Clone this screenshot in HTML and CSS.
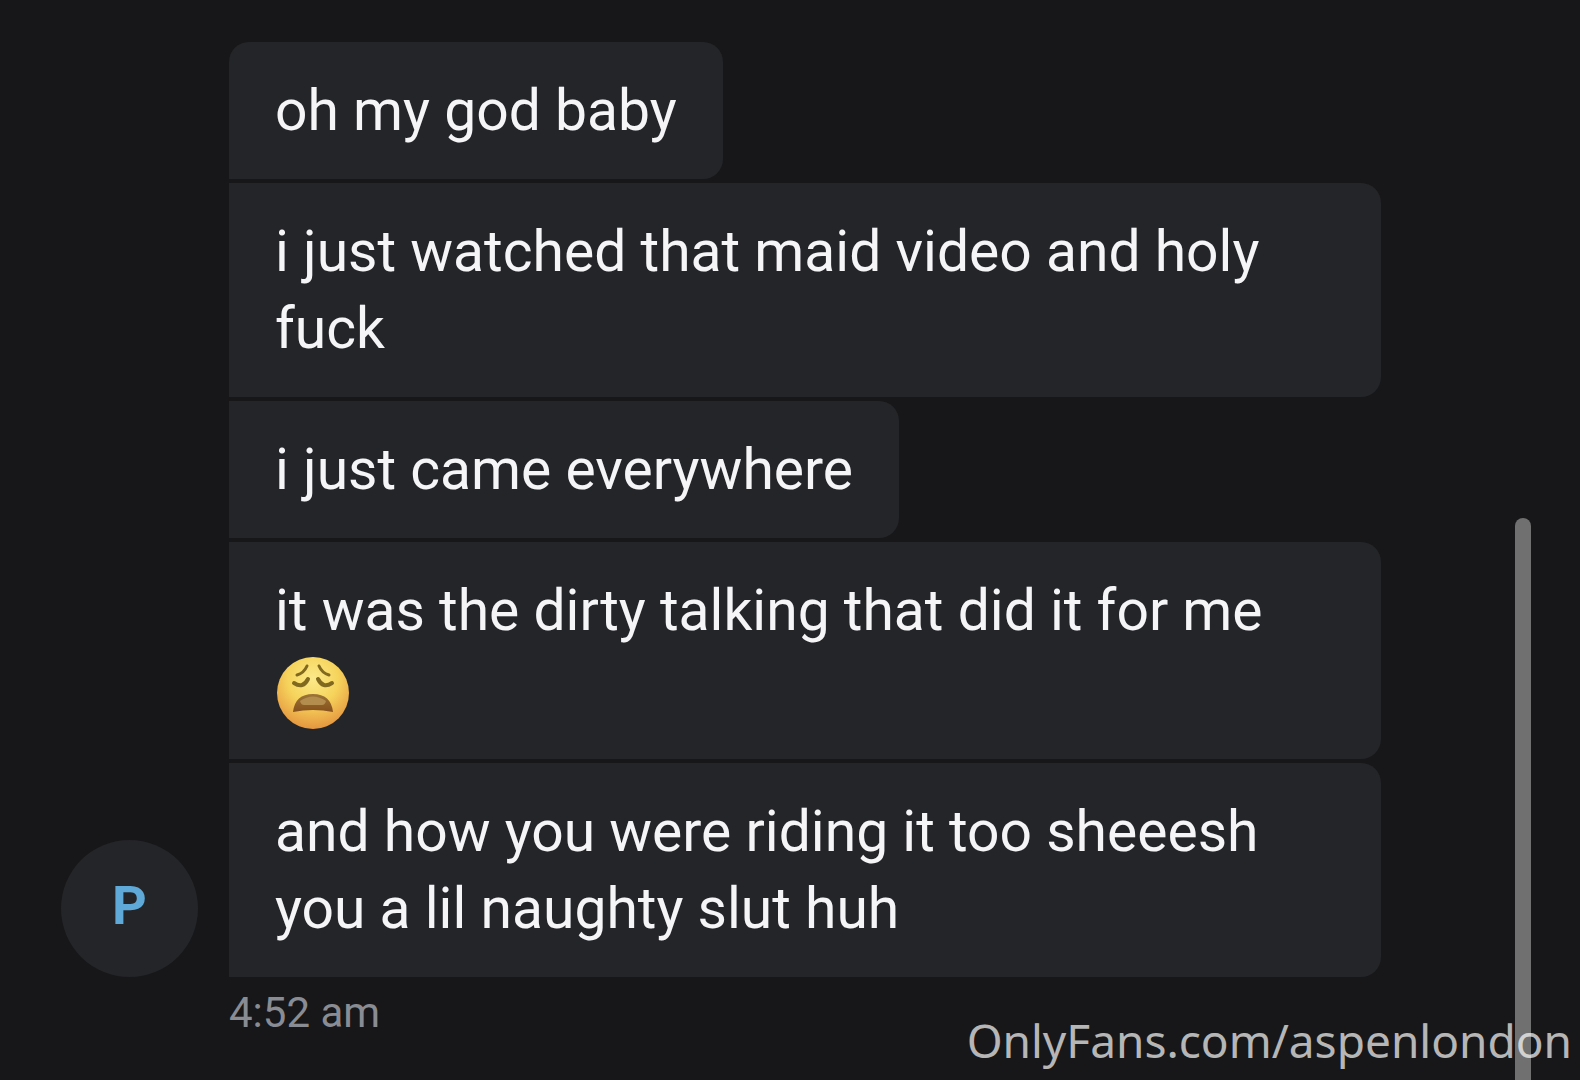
FILE: index.html
```
<!DOCTYPE html>
<html lang="en">
<head>
  <meta charset="UTF-8" />
  <meta name="viewport" content="width=device-width, initial-scale=1.0"/>
  <title>Messages</title>
  <link rel="stylesheet" href="styles.css">
</head>
<body>
  <main class="chat">
    <div class="avatar">P</div>

    <div class="messages">
      <p class="bubble">oh my god baby</p>
      <p class="bubble">i just watched that maid video and holy fuck</p>
      <p class="bubble">i just came everywhere</p>
      <p class="bubble">it was the dirty talking that did it for me
        <svg class="emoji" viewBox="0 0 72 72" role="img" aria-label="weary face">
          <defs>
            <radialGradient id="face" cx="0.5" cy="0.3" r="0.7">
              <stop offset="0" stop-color="#fbe98a"/>
              <stop offset="0.5" stop-color="#f6d45c"/>
              <stop offset="1" stop-color="#e5963f"/>
            </radialGradient>
            <linearGradient id="mouth" x1="0" y1="0" x2="0" y2="1">
              <stop offset="0" stop-color="#9c7438"/>
              <stop offset="1" stop-color="#85501c"/>
            </linearGradient>
          </defs>
          <circle cx="36" cy="36" r="36" fill="url(#face)"/>
          <g fill="none" stroke="#80691f" stroke-linecap="round">
            <path d="M20 18 Q27 16 30 9" stroke-width="3"/>
            <path d="M52 18 Q45 16 42 9" stroke-width="3"/>
            <path d="M17 26 Q26 32 31 22" stroke-width="4"/>
            <path d="M55 26 Q46 32 41 22" stroke-width="4"/>
          </g>
          <path d="M16 55 Q18 37 36 37 Q54 37 56 55 Q36 51 16 55 Z" fill="url(#mouth)"/>
          <path d="M23 44 Q36 35 49 44 Q48 48 45 48 H27 Q24 48 23 44 Z" fill="#b28d4e"/>
        </svg>
      </p>
      <p class="bubble">and how you were riding it too sheeesh you a lil naughty slut huh</p>
    </div>

    <time class="time">4:52 am</time>
  </main>

  <div class="scrollbar"></div>
  <div class="watermark">OnlyFans.com/aspenlondon</div>
</body>
</html>
```
FILE: styles.css
```
:root {
  --bg-color: #171719;
  --bubble-bg: #242529;
  --text-color: #f5f5f8;
  --muted-color: #8a8c93;
  --accent-color: #5fa9d8;
}

body {
  margin: 0;
  min-height: 100vh;
  position: relative;
  overflow: hidden;
  background: var(--bg-color);
  color: var(--text-color);
  font-family: Roboto, sans-serif;
}

.chat {
  display: grid;
  grid-template-columns: 137px 1fr;
  column-gap: 31px;
  padding: 42px 199px 0 61px;
}

.avatar {
  align-self: end;
  display: flex;
  align-items: center;
  justify-content: center;
  height: 137px;
  box-sizing: border-box;
  padding-bottom: 6px;
  border-radius: 50%;
  background: var(--bubble-bg);
  color: var(--accent-color);
  font-size: 54px;
  font-weight: 700;
}

.messages {
  display: flex;
  flex-direction: column;
  align-items: flex-start;
  gap: 4px;
}

.bubble {
  margin: 0;
  padding: 30px 46px;
  border-radius: 0 20px 20px 0;
  background: var(--bubble-bg);
  font-size: 57px;
  line-height: 77px;
}

.bubble:first-child {
  border-top-left-radius: 20px;
}

.emoji {
  display: inline-block;
  width: 72px;
  height: 72px;
  margin: 0 2px;
  vertical-align: -22px;
}

.time {
  grid-column: 2;
  margin-top: 8px;
  color: var(--muted-color);
  font-size: 42px;
  line-height: 56px;
}

.scrollbar {
  position: absolute;
  top: 48%;
  right: 49px;
  bottom: 0;
  width: 16px;
  border-radius: 8px 8px 0 0;
  background: #707070;
}

.watermark {
  position: absolute;
  right: 8px;
  bottom: 10px;
  color: rgba(255, 255, 255, 0.7);
  font-family: "Noto Sans", sans-serif;
  font-size: 46px;
  line-height: 60px;
}
```
